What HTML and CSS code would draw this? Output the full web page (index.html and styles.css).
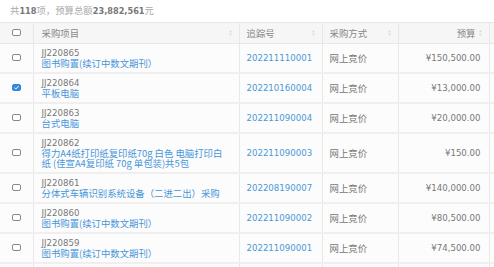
FILE: index.html
```html
<!DOCTYPE html>
<html lang="zh">
<head>
<meta charset="utf-8">
<link rel="stylesheet" href="styles.css">
</head>
<body>
<div class="summary"><span class="z">共</span><b>118</b><span class="z">项，预算总额</span><b>23,882,561</b><span class="z">元</span></div>
<table class="grid">
  <colgroup>
    <col class="c-check"><col class="c-name"><col class="c-track"><col class="c-way"><col class="c-budget"><col class="c-more">
  </colgroup>
  <thead>
    <tr>
      <th class="chk"><span class="box"></span></th>
      <th><div class="th-in"><span class="z">采购项目</span><svg class="sort" viewBox="0 0 4 8"><path d="M2 0L4 3H0Z M2 8L4 5H0Z"/></svg></div></th>
      <th><div class="th-in"><span class="z">追踪号</span><svg class="sort" viewBox="0 0 4 8"><path d="M2 0L4 3H0Z M2 8L4 5H0Z"/></svg></div></th>
      <th><div class="th-in"><span class="z">采购方式</span><svg class="sort" viewBox="0 0 4 8"><path d="M2 0L4 3H0Z M2 8L4 5H0Z"/></svg></div></th>
      <th><div class="th-in right"><span class="z">预算</span><svg class="sort" viewBox="0 0 4 8"><path d="M2 0L4 3H0Z M2 8L4 5H0Z"/></svg></div></th>
      <th></th>
    </tr>
  </thead>
  <tbody>
    <tr>
      <td class="chk"><span class="box"></span></td>
      <td><div class="code">JJ220865</div><a class="link name">图书购置(续订中数文期刊）</a></td>
      <td><a class="link num">202211110001</a></td>
      <td class="z">网上竞价</td>
      <td class="money">¥150,500.00</td>
      <td></td>
    </tr>
    <tr>
      <td class="chk"><span class="box on"><svg viewBox="0 0 8 6"><path d="M1.5 3.2L3.3 4.8L6.6 1.2" /></svg></span></td>
      <td><div class="code">JJ220864</div><a class="link name">平板电脑</a></td>
      <td><a class="link num">202210160004</a></td>
      <td class="z">网上竞价</td>
      <td class="money">¥13,000.00</td>
      <td></td>
    </tr>
    <tr>
      <td class="chk"><span class="box"></span></td>
      <td><div class="code">JJ220863</div><a class="link name">台式电脑</a></td>
      <td><a class="link num">202211090004</a></td>
      <td class="z">网上竞价</td>
      <td class="money">¥20,000.00</td>
      <td></td>
    </tr>
    <tr>
      <td class="chk"><span class="box"></span></td>
      <td><div class="code">JJ220862</div><a class="link name">得力A4纸打印纸复印纸70g 白色 电脑打印白<br>纸 (佳宣A4复印纸 70g 单包装)共5包</a></td>
      <td><a class="link num">202211090003</a></td>
      <td class="z">网上竞价</td>
      <td class="money">¥150.00</td>
      <td></td>
    </tr>
    <tr>
      <td class="chk"><span class="box"></span></td>
      <td><div class="code">JJ220861</div><a class="link name">分体式车辆识别系统设备（二进二出）采购</a></td>
      <td><a class="link num">202208190007</a></td>
      <td class="z">网上竞价</td>
      <td class="money">¥140,000.00</td>
      <td></td>
    </tr>
    <tr>
      <td class="chk"><span class="box"></span></td>
      <td><div class="code">JJ220860</div><a class="link name">图书购置(续订中数文期刊）</a></td>
      <td><a class="link num">202211090002</a></td>
      <td class="z">网上竞价</td>
      <td class="money">¥80,500.00</td>
      <td></td>
    </tr>
    <tr>
      <td class="chk"><span class="box"></span></td>
      <td><div class="code">JJ220859</div><a class="link name">图书购置(续订中数文期刊）</a></td>
      <td><a class="link num">202211090001</a></td>
      <td class="z">网上竞价</td>
      <td class="money">¥74,500.00</td>
      <td></td>
    </tr>
    <tr>
      <td class="chk"><span class="box"></span></td>
      <td><div class="code">JJ220858</div><a class="link name">图书购置</a></td>
      <td><a class="link num">202211090000</a></td>
      <td class="z">网上竞价</td>
      <td class="money">¥10,000.00</td>
      <td></td>
    </tr>
  </tbody>
</table>
</body>
</html>
```

FILE: styles.css
```css
html, body {
  margin: 0;
  padding: 0;
  background: #fff;
  overflow: hidden;
}
body {
  font-family: "DejaVu Sans", "Noto Sans CJK SC", sans-serif;
  font-size: 8.6px;
  color: #777;
  width: 494px;
  height: 267px;
}
.z, .name {
  font-family: "Noto Sans CJK SC", sans-serif;
  font-size: 9.4px;
}
.summary {
  height: 22px;
  line-height: 20px;
  padding-left: 10px;
  color: #aaa;
  display: flex;
  align-items: baseline;
}
.summary b {
  color: #777;
  font-weight: 600;
  font-size: 8.2px;
}
.grid {
  table-layout: fixed;
  border-collapse: collapse;
  width: 560px;
}
.c-check { width: 33px; }
.c-name { width: 206px; }
.c-track { width: 83px; }
.c-way { width: 76px; }
.c-budget { width: 91px; }
.c-more { width: 71px; }
.grid th, .grid td {
  border: 1px solid #e8e8e8;
  padding: 4px 7px;
  line-height: 10px;
  vertical-align: middle;
  text-align: left;
  font-weight: normal;
}
.grid th {
  background: #f6f6f6;
  color: #888;
  height: 12px;
  border-top: 1px solid #e6e6e6;
}
.grid td {
  background: #fcfcfc;
  height: 20px;
  border-bottom: 2px solid #efefef;
}
.grid th:first-child, .grid td:first-child {
  border-left: none;
}
.grid td:nth-child(2), .grid th:nth-child(2) {
  padding-left: 8px;
}
.grid .chk {
  text-align: center;
  padding: 0;
}
.box {
  display: inline-block;
  width: 7px;
  height: 5px;
  border: 1px solid #888;
  border-radius: 2px;
  vertical-align: middle;
  position: relative;
  top: -1px;
  background: #fff;
}
.box.on {
  background: #3585dc;
  border-color: #3585dc;
}
.box svg {
  display: block;
  width: 7px;
  height: 5px;
  fill: none;
  stroke: #fff;
  stroke-width: 1.2;
}
.th-in {
  display: flex;
  align-items: center;
  justify-content: space-between;
}
.th-in.right {
  justify-content: flex-end;
  gap: 3px;
}
.sort {
  width: 3px;
  height: 6px;
  fill: #dadada;
}
.code {
  color: #777;
}
.link {
  color: #4896d9;
  text-decoration: none;
}
.name {
  display: block;
}
.num {
  color: #4a98d8;
}
.grid .money {
  text-align: right;
  padding-right: 8px;
  color: #777;
}
```
